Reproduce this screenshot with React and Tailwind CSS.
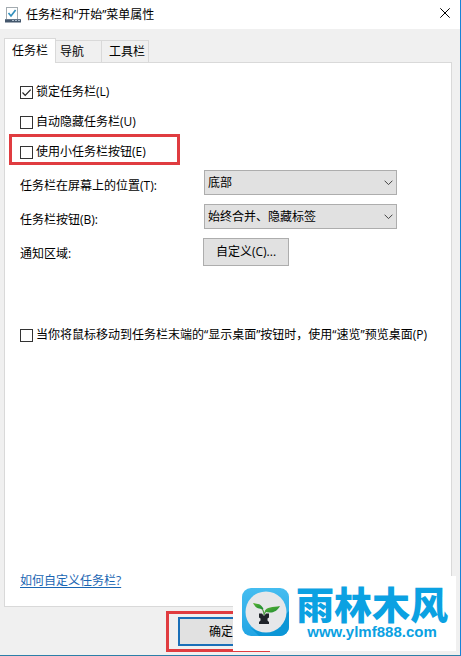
import { useState } from "react";

function Checkbox({ name, label, checked, onChange, highlighted }) {
  return (
    <div className="relative flex h-[30px] items-center">
      {highlighted && (
        <div className="pointer-events-none absolute -left-[11px] -top-[3px] h-[31px] w-[171px] border-3 border-[#e03c40]" />
      )}
      <label className="flex items-center gap-[3px] whitespace-nowrap">
        <span className="relative flex">
          <input
            type="checkbox"
            name={name}
            checked={checked}
            onChange={onChange}
            className="size-[13px] appearance-none border border-[#333333] bg-white"
          />
          {checked && (
            <svg
              viewBox="0 0 13 13"
              className="pointer-events-none absolute inset-0 size-[13px]"
            >
              <path
                d="M2.5 6.5 5.2 9.3 10.7 3.6"
                fill="none"
                stroke="#222"
                strokeWidth="1.2"
              />
            </svg>
          )}
        </span>
        {label}
      </label>
    </div>
  );
}

function Select({ id, value, onChange, options }) {
  return (
    <div className="relative ml-px w-[193px]">
      <select
        id={id}
        value={value}
        onChange={onChange}
        className="h-[25px] w-full appearance-none border border-[#adadad] bg-[#e1e1e1] pl-[3px] pr-5"
      >
        {options.map((option) => (
          <option key={option}>{option}</option>
        ))}
      </select>
      <svg
        viewBox="0 0 9 6"
        className="pointer-events-none absolute right-1 top-[10px] h-[6px] w-[9px]"
      >
        <path d="M.6.7 4.5 4.6 8.4.7" fill="none" stroke="#444" />
      </svg>
    </div>
  );
}

function TaskbarIcon() {
  return (
    <svg viewBox="0 0 16 16" className="size-4">
      <rect x="1.5" y=".5" width="11" height="12" fill="#fff" stroke="#a3abb0" />
      <path
        d="M3.500 6 6 9l4.600-6"
        fill="none"
        stroke="#3390bd"
        strokeWidth="1.7"
      />
      <path d="M0 12h16v3.500H0z" fill="#44576c" />
      <path d="M0 12h16v1H0z" fill="#66788c" />
      <path d="M7 13h2v1H7zM10 13h2v1h-2zM13 13h2v1h-2z" fill="#aebdcb" />
    </svg>
  );
}

function SproutLogo() {
  return (
    <svg viewBox="0 0 48 48" className="size-12 shrink-0">
      <defs>
        <linearGradient id="tile" x1="0" y1="0" x2="0" y2="1">
          <stop offset="0" stopColor="#45bdf0" />
          <stop offset="1" stopColor="#22a5e4" />
        </linearGradient>
        <linearGradient id="leaf" x1="0" y1="0" x2="1" y2="1">
          <stop offset="0" stopColor="#5cb531" />
          <stop offset="1" stopColor="#1b8a35" />
        </linearGradient>
      </defs>
      <rect width="47" height="48" rx="9" fill="url(#tile)" />
      <path
        d="M8 39C20 49 38 42 43 27l4-4v16a9 9 0 0 1-9 9H17z"
        fill="#0c96d6"
      />
      <circle cx="24" cy="24" r="20.5" fill="#e6e7e9" />
      <path
        d="M22 27c0-4-1-6-4-8M22 27c1-4 3-5 6-5"
        fill="none"
        stroke="#4f9a45"
        strokeWidth="1.2"
      />
      <path d="M11 15c4 1 8 0 10.500 6-5 0-8-1-10.500-6z" fill="url(#leaf)" />
      <path d="M22.500 23.500c2-5 8-4 15.500-5.500-3 6-9 8-15.500 5.500z" fill="url(#leaf)" />
      <path
        d="M17 25.500h3l1.500 2h1l1.500-2h3v4l-1.500 1v2l1.500 1.500v2H17v-2l1.500-1.500v-2l-1.500-1z"
        fill="#20242a"
      />
    </svg>
  );
}

const TABS = [
  { name: "任务栏", style: "w-[52px] justify-center" },
  { name: "导航", style: "w-[46px] pl-1" },
  { name: "工具栏", style: "w-[47px] pl-[7px]" },
];

export default function App() {
  const [tab, setTab] = useState("任务栏");
  const [position, setPosition] = useState("底部");
  const [grouping, setGrouping] = useState("始终合并、隐藏标签");
  const [options, setOptions] = useState({
    lock: true,
    autoHide: false,
    small: false,
    peek: false,
  });

  const handleCheck = (e) => {
    const { name, checked } = e.target;
    setOptions((prev) => ({ ...prev, [name]: checked }));
  };

  return (
    <div className="relative flex min-h-screen flex-col overflow-hidden border-b border-r border-b-[#2c7fa8] border-r-[#1683d8] bg-[#f0f0f0] font-['Open_Sans','Noto_Sans_CJK_SC',sans-serif] text-[12px] leading-5 text-black">
      <header className="flex h-[29px] items-center justify-between bg-white pl-[5px] pr-[10px]">
        <div className="flex items-center gap-[5px]">
          <TaskbarIcon />
          <h1>任务栏和“开始”菜单属性</h1>
        </div>
        <button type="button" aria-label="关闭" className="pb-1">
          <svg viewBox="0 0 10 10" className="size-[10px]">
            <path d="M.3.3l9.400 9.400M9.700.3.3 9.700" stroke="#000" />
          </svg>
        </button>
      </header>

      <div className="flex items-end pl-1 pt-[9px]" role="tablist">
        {TABS.map(({ name, style }) => (
          <button
            key={name}
            type="button"
            role="tab"
            aria-selected={tab === name}
            onClick={() => setTab(name)}
            className={`${style} flex items-center border-r border-t border-[#d9d9d9] ${
              tab === name
                ? "relative -mb-px h-[25px] border-l bg-white"
                : "h-[22px]"
            }`}
          >
            {name}
          </button>
        ))}
      </div>

      <main className="ml-1 mr-[8px] flex grow flex-col border border-[#d9d9d9] bg-white px-[15px] pb-[15px] pt-[14px]">
        <Checkbox
          name="lock"
          label="锁定任务栏(L)"
          checked={options.lock}
          onChange={handleCheck}
        />
        <Checkbox
          name="autoHide"
          label="自动隐藏任务栏(U)"
          checked={options.autoHide}
          onChange={handleCheck}
        />
        <Checkbox
          name="small"
          label="使用小任务栏按钮(E)"
          checked={options.small}
          onChange={handleCheck}
          highlighted
        />

        <div className="mt-[3px] grid grid-cols-[183px_1fr] auto-rows-[34px] items-start">
          <label htmlFor="position" className="pt-[6px]">
            任务栏在屏幕上的位置(T):
          </label>
          <Select
            id="position"
            value={position}
            onChange={(e) => setPosition(e.target.value)}
            options={["底部", "左侧", "右侧", "顶部"]}
          />
          <label htmlFor="grouping" className="pt-[6px]">
            任务栏按钮(B):
          </label>
          <Select
            id="grouping"
            value={grouping}
            onChange={(e) => setGrouping(e.target.value)}
            options={["始终合并、隐藏标签", "当任务栏被占满时合并", "从不合并"]}
          />
          <span className="pt-[6px]">通知区域:</span>
          <button
            type="button"
            className="h-7 w-[86px] border border-[#adadad] bg-[#e1e1e1]"
          >
            自定义(C)...
          </button>
        </div>

        <div className="mt-12">
          <Checkbox
            name="peek"
            label="当你将鼠标移动到任务栏末端的“显示桌面”按钮时，使用“速览”预览桌面(P)"
            checked={options.peek}
            onChange={handleCheck}
          />
        </div>

        <a
          href="#help"
          className="mt-auto self-start text-[#1a66b3] underline underline-offset-2"
        >
          如何自定义任务栏?
        </a>
      </main>

      <footer className="flex pb-[3px] pl-[166px] pt-1">
        <div className="border-3 border-[#e03c40] py-[3px] pl-[9px] pr-[3px]">
          <button
            type="button"
            className="h-[29px] w-[86px] border-2 border-[#1a6fb8] bg-[#e1e1e1]"
          >
            确定
          </button>
        </div>
      </footer>

      <div className="absolute bottom-1 right-1 flex h-[75px] w-[223px] items-start gap-[6px] bg-white pl-[9px] text-[#0ba1e2]">
        <div className="pt-3">
          <SproutLogo />
        </div>
        <div className="flex flex-col items-center pt-2">
          <span className="font-['Noto_Sans_CJK_SC',sans-serif] text-[38px] font-black leading-[38px]">
            雨林木风
          </span>
          <span className="font-['Liberation_Sans',sans-serif] text-[15px] font-bold leading-5">
            www.ylmf888.com
          </span>
        </div>
      </div>
    </div>
  );
}
